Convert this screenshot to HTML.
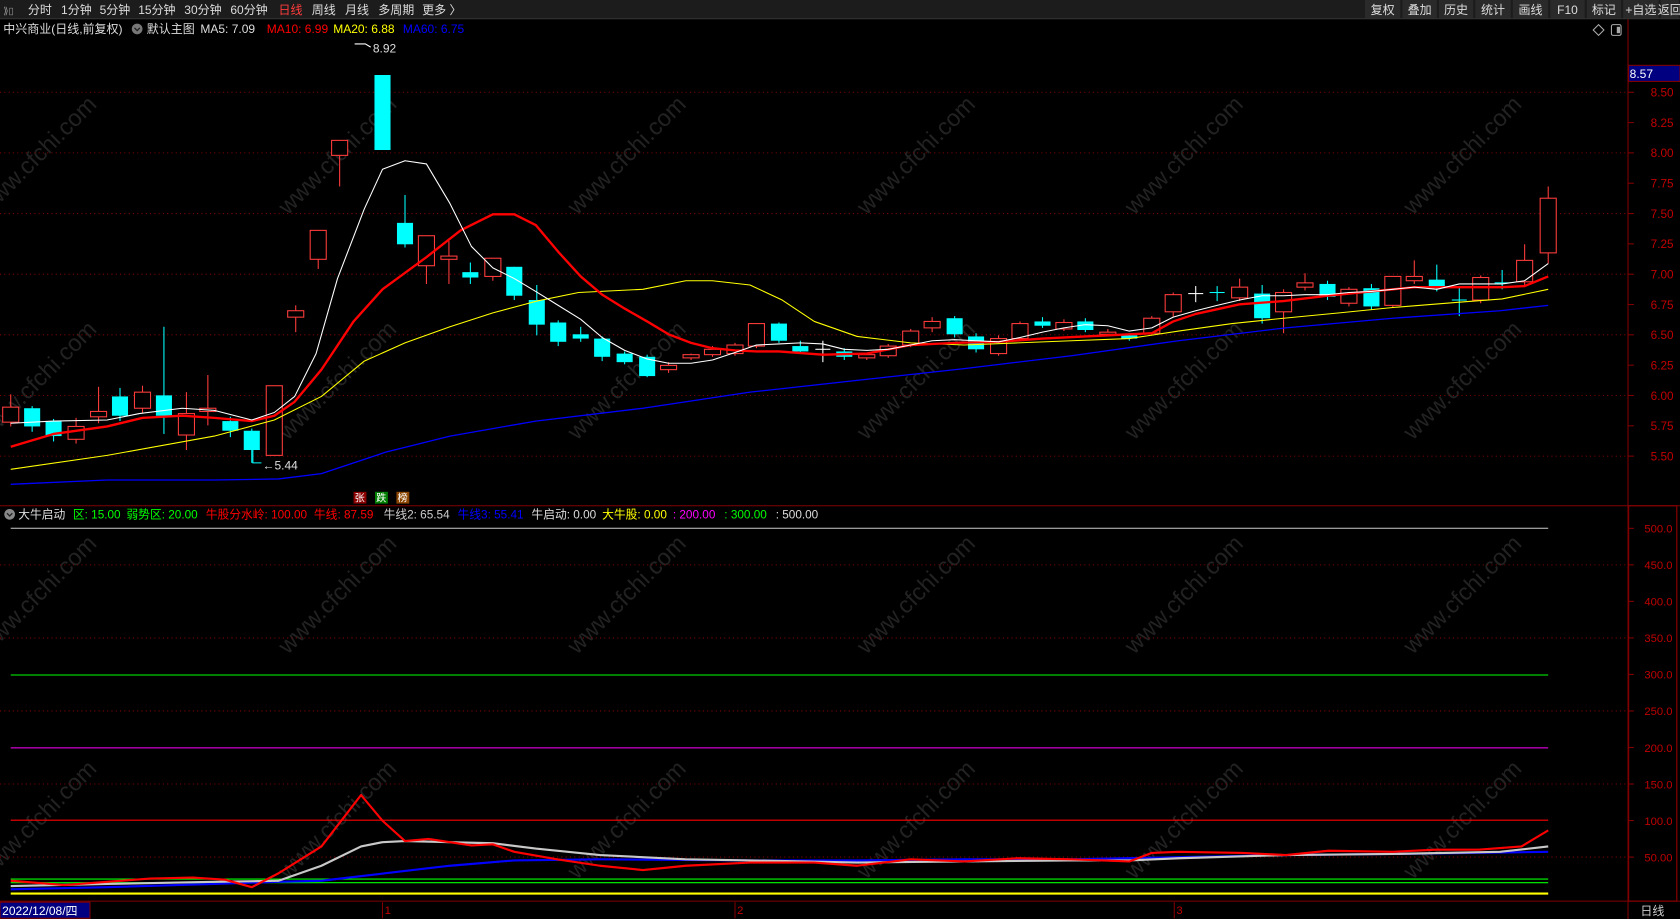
<!DOCTYPE html>
<html><head><meta charset="utf-8"><style>
html,body{margin:0;padding:0;background:#000;width:1680px;height:919px;overflow:hidden}
svg{display:block}
text{font-family:"Liberation Sans","Noto Sans CJK SC",sans-serif;}
</style></head><body>
<svg id="s" width="1680" height="919" viewBox="0 0 1568 857.7" preserveAspectRatio="none" xmlns="http://www.w3.org/2000/svg">
<rect width="1568" height="857.7" fill="#000"/>
<g id="wm"></g>
<rect x="0" y="0" width="1568" height="17" fill="#1c1c1c"/>
<line x1="0" y1="17.5" x2="1568" y2="17.5" stroke="#3a3a3a"/>
<g font-size="11.2" fill="#ddd">
<text x="3" y="13" fill="#999" font-size="9">⟫▯</text>
<text x="26" y="13">分时</text><text x="57" y="13">1分钟</text><text x="93" y="13">5分钟</text>
<text x="129" y="13">15分钟</text><text x="172" y="13">30分钟</text><text x="215" y="13">60分钟</text>
<text x="260" y="13" fill="#ff3c3c">日线</text><text x="291" y="13">周线</text><text x="322" y="13">月线</text>
<text x="353" y="13">多周期</text><text x="394" y="13">更多 〉</text>
</g>
<g id="btns" font-size="11.2" fill="#ddd"></g>
<g font-size="11.2">
<text x="3" y="31" fill="#ddd">中兴商业(日线,前复权)</text>
<circle cx="128" cy="27" r="5" fill="#777"/><path d="M125.5 26l2.5 2.5 2.5-2.5" stroke="#222" fill="none" stroke-width="1.2"/>
<text x="137" y="31" fill="#ddd">默认主图</text>
<text x="187" y="31" fill="#ddd">MA5: 7.09</text>
<text x="249" y="31" fill="#ff0000">MA10: 6.99</text>
<text x="311" y="31" fill="#ffff00">MA20: 6.88</text>
<text x="376" y="31" fill="#0000ff">MA60: 6.75</text>
</g>
<path d="M1492 23l5 5-5 5-5-5z" stroke="#aaa" fill="none"/>
<rect x="1504" y="23" width="9" height="10" rx="1.5" stroke="#aaa" fill="none"/><rect x="1509" y="25" width="3" height="6" fill="#aaa"/>
<line x1="1519.5" y1="18" x2="1519.5" y2="857.7" stroke="#800000"/>
<line x1="0" y1="472" x2="1568" y2="472" stroke="#800000"/>
<rect x="1520" y="472" width="45" height="369" fill="none" stroke="#800000" stroke-width="1.2"/>
<line x1="0" y1="841" x2="1568" y2="841" stroke="#800000"/>
<rect x="1520" y="61" width="48" height="15" fill="#000080" stroke="#800000"/>
<text x="1521" y="73" font-size="11.2" fill="#fff">8.57</text>
<g id="grid"></g>
<g id="cand"></g>
<g fill="none" stroke-linejoin="round">
<polyline id="ma60" stroke="#0000ff" stroke-width="1.2"/>
<polyline id="ma20" stroke="#ffff00" stroke-width="1"/>
<polyline id="ma10" stroke="#ff0000" stroke-width="2.2"/>
<polyline id="ma5" stroke="#ffffff" stroke-width="1"/>
</g>
<g font-size="11.2" fill="#ddd">
<path d="M331 41h10l5 3" stroke="#fff" fill="none"/><text x="348" y="49" fill="#ddd">8.92</text>
<path d="M236 418v14h8" stroke="#0ff" fill="none"/><text x="245" y="438" fill="#ddd">←5.44</text>
</g>
<g font-size="9.5" fill="#fff">
<rect x="330" y="459" width="12" height="11" fill="#8b0000"/><text x="331" y="468">张</text>
<rect x="350" y="459" width="12" height="11" fill="#008000"/><text x="351" y="468">跌</text>
<rect x="370" y="459" width="12" height="11" fill="#8b4500"/><text x="371" y="468">榜</text>
</g>
<g font-size="11">
<circle cx="9" cy="480" r="5" fill="#888"/><path d="M6.5 479l2.5 2.5 2.5-2.5" stroke="#222" fill="none" stroke-width="1.2"/>
<text x="17" y="484" fill="#ddd">大牛启动</text>
<text x="68" y="484" fill="#00ff00">区: 15.00</text>
<text x="118" y="484" fill="#00ff00">弱势区: 20.00</text>
<text x="192" y="484" fill="#ff0000">牛股分水岭: 100.00</text>
<text x="293" y="484" fill="#ff0000">牛线: 87.59</text>
<text x="358" y="484" fill="#ccc">牛线2: 65.54</text>
<text x="427" y="484" fill="#0000ff">牛线3: 55.41</text>
<text x="496" y="484" fill="#ddd">牛启动: 0.00</text>
<text x="562" y="484" fill="#ffff00">大牛股: 0.00</text>
<text x="628" y="484" fill="#ff00ff">: 200.00</text>
<text x="676" y="484" fill="#00ff00">: 300.00</text>
<text x="724" y="484" fill="#ddd">: 500.00</text>
</g>
<g stroke-width="1">
<line x1="10" y1="493" x2="1445" y2="493" stroke="#ccc"/>
<line x1="10" y1="630" x2="1445" y2="630" stroke="#00ff00"/>
<line x1="10" y1="698" x2="1445" y2="698" stroke="#ff00ff"/>
<line x1="10" y1="765.5" x2="1445" y2="765.5" stroke="#ff0000"/>
<line x1="10" y1="820.4" x2="1445" y2="820.4" stroke="#00ff00"/>
<line x1="10" y1="823.8" x2="1445" y2="823.8" stroke="#00ff00"/>
<line x1="10" y1="834" x2="1445" y2="834" stroke="#ffff00" stroke-width="2"/>
</g>
<g fill="none" stroke-linejoin="round">
<polyline id="l3" stroke="#0000ff" stroke-width="2"/>
<polyline id="l2" stroke="#c8c8c8" stroke-width="2"/>
<polyline id="l1" stroke="#ff0000" stroke-width="2"/>
</g>
<rect x="0" y="842" width="84" height="15" fill="#000080" stroke="#800000"/>
<text x="2" y="854" font-size="11.2" fill="#fff">2022/12/08/四</text>
<g stroke="#800000"><line x1="357" y1="842" x2="357" y2="857"/><line x1="686" y1="842" x2="686" y2="857"/><line x1="1096" y1="842" x2="1096" y2="857"/></g>
<g font-size="10.5" fill="#c00000"><text x="359" y="853">1</text><text x="688" y="853">2</text><text x="1098" y="853">3</text></g>
<text x="1531" y="854" font-size="11.2" fill="#ccc">日线</text>
</svg>
<script>
var NS="http://www.w3.org/2000/svg";
function el(t,a,p){var e=document.createElementNS(NS,t);for(var k in a)e.setAttribute(k,a[k]);(p||document.getElementById('s')).appendChild(e);return e;}
var bl=["复权","叠加","历史","统计","画线","F10","标记","+自选","返回"];
var bx=[1274,1309,1343,1377,1412,1447,1481,1515,1550];var bw=[34,33,33,34,34,33,33,34,18];
var B=document.getElementById('btns');
for(var i=0;i<bl.length;i++){el('rect',{x:bx[i],y:0,width:bw[i]-1,height:17,fill:'#2a2a2a'},B);var t=el('text',{x:bx[i]+(bw[i]-1)/2,y:13,'text-anchor':'middle'},B);t.textContent=bl[i];}
var W=document.getElementById('wm');
var cols=[40,320,590,860,1110,1370];var rows=[150,360,560,770];
rows.forEach(function(y){cols.forEach(function(x){var t=el('text',{x:x,y:y,'font-size':'22',fill:'#222','text-anchor':'middle',transform:'rotate(-45 '+x+' '+y+')'},W);t.textContent='www.cfchi.com';});});
var G=document.getElementById('grid');
function yp(p){return 86.1+(8.5-p)*113.2;}
function yv(v){return 799.9-(v-50)*0.6818;}
for(var p=8.5;p>=5.49;p-=0.25){var y=yp(p);if(Math.round(p*100)%50==0)el('line',{x1:0,y1:y,x2:1519,y2:y,stroke:'#800000','stroke-dasharray':'1 3'},G);
el('line',{x1:1519,y1:y,x2:1525,y2:y,stroke:'#800000'},G);var t=el('text',{x:1562,y:y+4,'font-size':'11','fill':'#c00000','text-anchor':'end'},G);t.textContent=p.toFixed(2);}
for(var v=500;v>=50;v-=50){var y=yv(v);if(v%100==50)el('line',{x1:0,y1:y,x2:1519,y2:y,stroke:'#800000','stroke-dasharray':'1 3'},G);
el('line',{x1:1519,y1:y,x2:1525,y2:y,stroke:'#800000'},G);var t=el('text',{x:1561,y:y+4,'font-size':'10.5',fill:'#c00000','text-anchor':'end'},G);t.textContent=v==50?'50.00':v.toFixed(1);}
var C=[[10,'r',380,394,368,398],[30,'c',381,398,379,403],[50,'c',393,407,391,412],[71,'r',398,410,390,414],[92,'r',384,389,361,395],[112,'c',370,388,362,393],[133,'r',366,381,360,386],[153,'c',369,388,305,405],[174,'r',386,406,366,420],[194,'r',381,384,350,397],[215,'c',393,402,389,408],[235,'c',402,420,400,432],[256,'r',360,425,360,425],[276,'r',290,296,285,310],[297,'r',215,242,215,251],[317,'r',131,145,131,174],[357,'c',70,140,70,140],[378,'c',208,228,182,231],[398,'r',220,248,220,265],[419,'r',239,242,225,265],[439,'c',254,259,245,265],[460,'r',241,258,241,262],[480,'c',249,276,249,280],[501,'c',280,303,266,313],[521,'c',301,319,299,323],[542,'c',312,316,305,319],[562,'c',316,333,314,337],[583,'c',330,338,328,340],[604,'c',333,351,331,352],[624,'r',341,345,338,348],[645,'r',331,334,330,336],[665,'r',326,331,323,333],[686,'r',322,330,320,332],[706,'r',302,323,302,325],[727,'c',302,318,301,320],[747,'c',323,328,318,330],[768,'w',326,326,318,338],[788,'c',328,333,325,336],[809,'r',331,334,329,336],[829,'r',323,332,321,334],[850,'r',309,322,307,324],[870,'r',300,306,296,310],[891,'c',297,312,295,315],[911,'c',314,326,311,329],[932,'r',316,330,313,332],[952,'r',302,316,300,318],[973,'c',300,304,296,306],[993,'r',301,307,298,309],[1013,'c',300,308,297,310],[1034,'r',310,312,307,314],[1054,'c',313,316,311,318],[1075,'r',297,311,295,313],[1095,'r',275,291,273,296],[1116,'w',274,274,267,282],[1136,'x',273,273,267,281],[1157,'r',268,278,260,281],[1178,'c',274,297,266,302],[1198,'r',273,291,270,311],[1218,'r',264,268,255,271],[1239,'c',265,277,262,280],[1259,'r',270,283,268,286],[1280,'c',269,286,265,289],[1300,'r',258,285,258,287],[1320,'r',258,262,243,265],[1341,'c',261,269,247,272],[1362,'x',280,280,268,295],[1382,'r',259,280,257,283],[1402,'x',264,264,252,270],[1423,'r',243,263,228,268],[1445,'r',185,236,174,246]];
var K=document.getElementById('cand');
C.forEach(function(c){var x=c[0],col=c[1]=='r'?'#ff3c3c':(c[1]=='w'?'#ffffff':'#00ffff');
el('line',{x1:x,y1:c[4],x2:x,y2:c[5],stroke:col},K);
if(c[1]=='w'||c[1]=='x'){el('line',{x1:x-7,y1:c[2],x2:x+7,y2:c[2],stroke:col},K);}
else if(c[1]=='r'){el('rect',{x:x-7.5,y:c[2],width:15,height:Math.max(c[3]-c[2],1),fill:'#000',stroke:col},K);}
else{el('rect',{x:x-7.5,y:c[2],width:15,height:Math.max(c[3]-c[2],2),fill:col},K);}});
function P(id,s){document.getElementById(id).setAttribute('points',s);}
P('ma5',"10,395 50,393 100,392 130,386 170,381 200,383 235,392 256,385 275,370 295,330 315,260 340,195 357,158 378,150 398,153 420,190 440,230 460,250 480,260 500,272 521,285 542,298 562,315 583,327 604,335 624,339 645,339 665,336 686,329 706,322 727,321 747,320 768,321 788,326 809,327 829,326 850,322 870,318 891,317 911,318 932,319 952,315 973,310 993,306 1013,303 1034,304 1054,309 1075,306 1095,296 1116,290 1136,285 1157,280 1178,276 1198,276 1218,275 1239,275 1259,273 1280,272 1300,270 1320,268 1341,270 1362,265 1382,265 1402,265 1423,262 1445,246");
P('ma10',"10,417 50,405 100,398 133,390 170,388 200,390 235,393 256,388 275,375 300,345 330,300 357,270 398,240 430,215 460,200 480,200 500,210 521,235 542,258 562,275 583,288 604,300 624,312 645,320 665,325 686,327 706,328 727,328 768,331 809,330 850,322 891,320 932,319 973,316 1013,314 1054,312 1075,311 1095,300 1116,293 1157,284 1198,281 1239,276 1280,272 1320,268 1362,268 1402,268 1423,267 1445,258");
P('ma20',"10,438 100,425 200,407 256,392 300,370 340,337 378,320 420,305 460,292 501,281 540,273 600,270 640,262 665,262 700,266 730,280 760,300 800,314 850,320 900,322 950,320 1000,318 1054,316 1100,309 1150,302 1198,297 1250,292 1300,287 1362,282 1402,279 1445,270");
P('ma60',"10,452 100,448 200,448 260,447 300,442 360,422 420,407 500,393 600,381 700,366 800,355 900,344 1000,332 1100,318 1200,306 1300,297 1400,290 1445,285");
P('l1',"10,822 60,826 100,823 140,820 180,819 210,821 235,828 260,815 300,790 337,742 357,766 378,785 400,783 420,786 440,789 460,788 480,795 520,802 560,808 600,812 640,808 700,805 760,805 800,808 850,802 900,804 950,801 1000,802 1054,804 1075,796 1100,795 1160,796 1200,798 1240,794 1300,795 1340,793 1380,793 1420,790 1445,775");
P('l2',"10,827 100,825 200,823 260,822 300,808 337,790 357,786 378,785 420,786 460,787 500,792 560,798 640,802 700,803 800,805 900,804 1000,803 1054,803 1100,801 1200,798 1300,797 1400,795 1445,790");
P('l3',"10,830 100,828 200,825 260,823 300,822 360,815 420,808 480,803 560,802 700,803 800,803 900,802 1000,802 1100,800 1200,798 1300,797 1445,795");
</script>
</body></html>
